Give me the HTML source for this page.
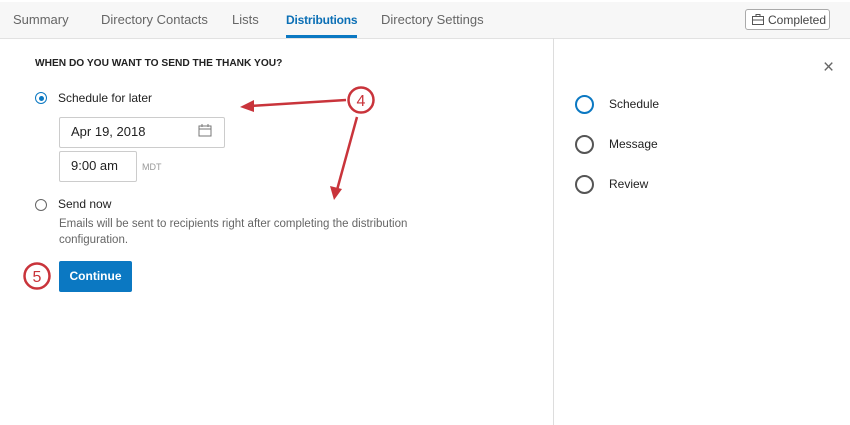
<!DOCTYPE html>
<html><head><style>
body{margin:0;width:850px;height:425px;overflow:hidden;background:#fff;font-family:"Liberation Sans",sans-serif;position:relative;color:#222}
.hdr{position:absolute;left:0;top:0;width:850px;height:36px;background:#f7f7f7;border-bottom:1px solid #e2e2e2;border-top:2px solid #fff}
.tab{position:absolute;top:12px;font-size:13px;color:#666}
.tab.a{color:#0b6fb5;font-weight:bold;font-size:12px;top:13px;letter-spacing:-0.2px}
.ul{position:absolute;left:286px;top:35px;width:71px;height:3px;background:#0b78c2}
.btnc{position:absolute;left:745px;top:9px;width:85px;height:21px;border:1px solid #aaa;border-radius:3px;background:#fff;font-size:12px;color:#444;box-sizing:border-box}
.div{position:absolute;left:553px;top:38px;width:1px;height:387px;background:#ddd}
.t{position:absolute;font-size:12px}
.box{position:absolute;border:1px solid #ccc;border-radius:2px;background:#fff;box-sizing:border-box}
.rad{position:absolute;width:12px;height:12px;border:1.5px solid #666;border-radius:50%;box-sizing:border-box}
.big{position:absolute;width:19px;height:19px;border:2px solid #555;border-radius:50%;box-sizing:border-box}
</style></head><body>
<div class="hdr"></div>
<div class="tab" style="left:13px">Summary</div>
<div class="tab" style="left:101px">Directory Contacts</div>
<div class="tab" style="left:232px">Lists</div>
<div class="tab a" style="left:286px">Distributions</div>
<div class="tab" style="left:381px">Directory Settings</div>
<div class="ul"></div>
<div class="btnc"><svg style="position:absolute;left:6px;top:4px" width="12" height="11" viewBox="0 0 12 11"><rect x="0.5" y="2.5" width="11" height="8" fill="none" stroke="#555"/><rect x="4" y="0.5" width="4" height="2" fill="none" stroke="#555"/><line x1="0.5" y1="6" x2="11.5" y2="6" stroke="#555"/></svg><span style="position:absolute;left:22px;top:3px">Completed</span></div>
<div class="div"></div>
<div class="t" style="left:35px;top:58px;font-size:10.2px;font-weight:bold;color:#222">WHEN DO YOU WANT TO SEND THE THANK YOU?</div>
<div class="rad" style="left:35px;top:92px;border-color:#0b78c2"></div>
<div style="position:absolute;left:38.5px;top:95.5px;width:5px;height:5px;border-radius:50%;background:#0b78c2"></div>
<div class="t" style="left:58px;top:91px">Schedule for later</div>
<div class="box" style="left:59px;top:117px;width:166px;height:31px"></div>
<div class="t" style="left:71px;top:124px;font-size:13px">Apr 19, 2018</div>
<svg style="position:absolute;left:198px;top:124px" width="14" height="13" viewBox="0 0 14 13"><rect x="1" y="2" width="12" height="10" fill="none" stroke="#777"/><line x1="1" y1="5" x2="13" y2="5" stroke="#777"/><line x1="4" y1="0" x2="4" y2="3" stroke="#777"/><line x1="10" y1="0" x2="10" y2="3" stroke="#777"/></svg>
<div class="box" style="left:59px;top:151px;width:78px;height:31px"></div>
<div class="t" style="left:71px;top:158px;font-size:13px">9:00 am</div>
<div class="t" style="left:142px;top:162px;font-size:9px;color:#999">MDT</div>
<div class="rad" style="left:35px;top:199px"></div>
<div class="t" style="left:58px;top:197px">Send now</div>
<div class="t" style="left:59px;top:216px;color:#666;line-height:16px;width:370px;font-size:11.5px">Emails will be sent to recipients right after completing the distribution configuration.</div>
<div style="position:absolute;left:59px;top:261px;width:73px;height:31px;background:#0b78c2;border-radius:2px;color:#fff;font-weight:bold;font-size:12px;text-align:center;line-height:31px">Continue</div>
<div style="position:absolute;left:823px;top:57px;font-size:19px;color:#666">×</div>
<div class="big" style="left:575px;top:95px;border-color:#0b78c2"></div>
<div class="t" style="left:609px;top:97px">Schedule</div>
<div class="big" style="left:575px;top:135px"></div>
<div class="t" style="left:609px;top:137px">Message</div>
<div class="big" style="left:575px;top:175px"></div>
<div class="t" style="left:609px;top:177px">Review</div>
<svg style="position:absolute;left:0;top:0" width="850" height="425">
<g stroke="#c9343b" stroke-width="2.5" fill="none">
<circle cx="361" cy="100" r="12.5"/>
<circle cx="37" cy="276" r="12.5"/>
<line x1="346" y1="100" x2="250" y2="106"/>
<line x1="357" y1="117" x2="337" y2="190"/>
</g>
<polygon points="240,107 254,100 254,112" fill="#c9343b"/>
<polygon points="334,200 330,186 342,189" fill="#c9343b"/>
<text x="361" y="106" font-size="16" text-anchor="middle" fill="#c9343b" font-family="Liberation Sans">4</text>
<text x="37" y="282" font-size="16" text-anchor="middle" fill="#c9343b" font-family="Liberation Sans">5</text>
</svg>
</body></html>
